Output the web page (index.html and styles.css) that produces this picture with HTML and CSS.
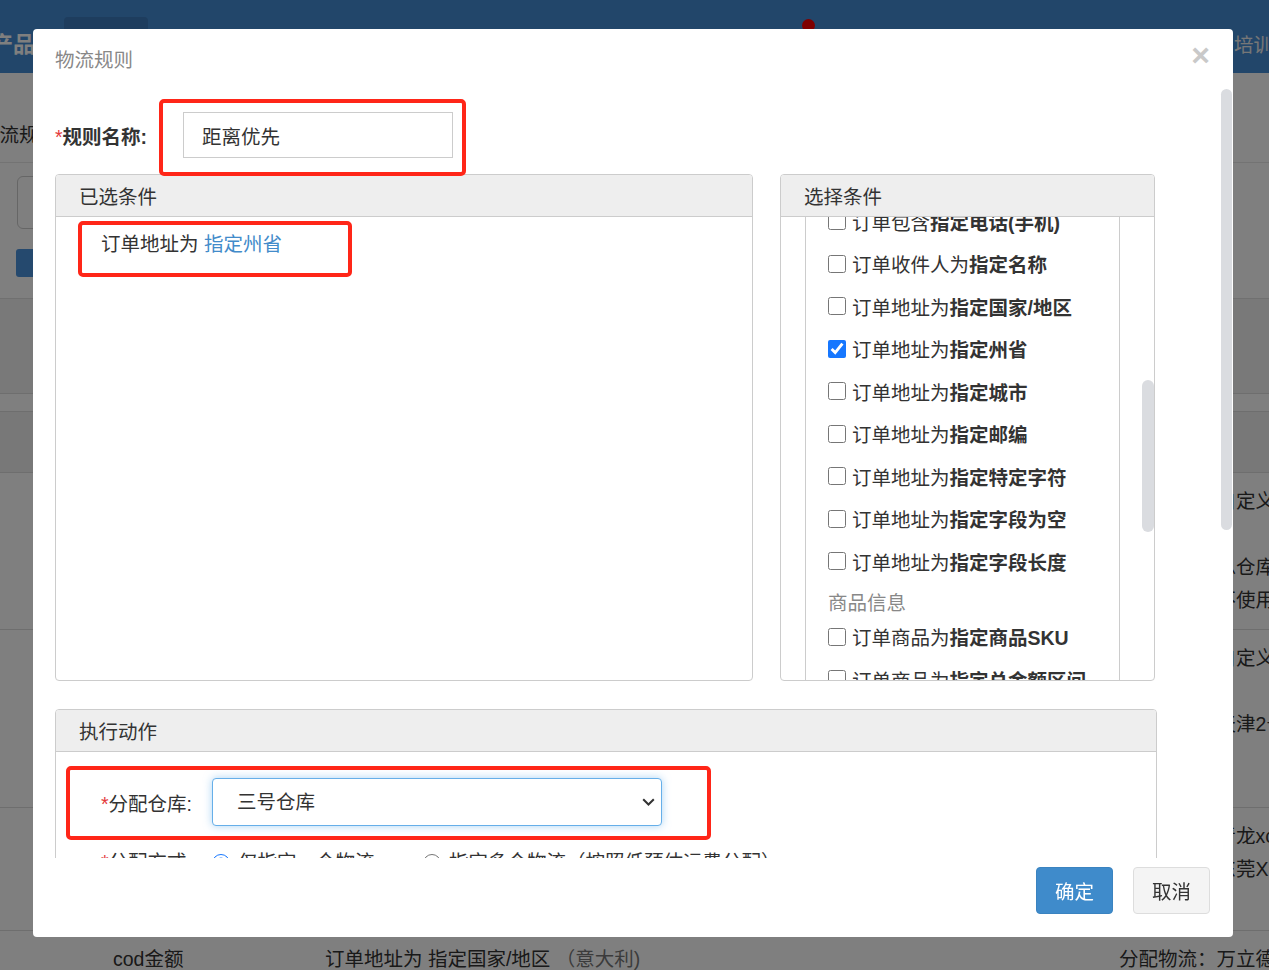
FILE: index.html
```html
<!DOCTYPE html>
<html lang="zh-CN">
<head>
  <meta charset="UTF-8" />
  <meta name="viewport" content="width=device-width, initial-scale=1.0" />
  <title>物流规则</title>
  <link rel="stylesheet" href="styles.css">
</head>
<body>
  <div class="page">
    <div class="topnav">
      <span class="brand">产品</span>
      <span class="nav-tab"></span>
      <span class="nav-dot"></span>
      <span class="nav-link">培训</span>
    </div>

    <div class="page-title">物流规则</div>

    <div class="search-box">
      <div class="search-input"></div>
      <button class="search-btn">全部</button>
    </div>

    <div class="toolbar"></div>
    <div class="table-gap"></div>

    <div class="rule-table">
      <div class="tr th">
        <div class="td">规则名称</div>
        <div class="td">条件</div>
        <div class="td">动作</div>
      </div>
      <div class="tr tr-1">
        <div class="td"><p>默认规则</p></div>
        <div class="td"><p>订单来源为 指定平台</p></div>
        <div class="td">
          <p>分配物流：自定义</p>
          <p class="gap">分配仓库：总仓库</p>
          <p>运费计算：不使用</p>
        </div>
      </div>
      <div class="tr tr-2">
        <div class="td"><p>天津仓规则</p></div>
        <div class="td"><p>订单地址为 指定州省</p></div>
        <div class="td">
          <p>分配物流：自定义</p>
          <p class="gap">分配仓库：天津2号仓</p>
        </div>
      </div>
      <div class="tr tr-3">
        <div class="td"><p>东莞仓规则</p></div>
        <div class="td"><p>订单地址为 指定城市</p></div>
        <div class="td">
          <p>分配物流：青龙xc物流</p>
          <p>分配仓库：东莞X仓</p>
        </div>
      </div>
      <div class="tr tr-4">
        <div class="td"><p>cod金额</p></div>
        <div class="td"><p>订单地址为 指定国家/地区 <span class="muted">（意大利)</span></p></div>
        <div class="td"><p>分配物流：万立德</p></div>
      </div>
    </div>
  </div>

  <div class="mask"></div>

  <div class="modal">
    <div class="modal-header">
      <h4 class="modal-title">物流规则</h4>
      <button class="modal-close">×</button>
    </div>

    <div class="modal-body">
      <div class="rule-form">
        <div class="rule-name">
          <label class="name-label"><span class="req">*</span>规则名称:</label>
          <input class="name-input" type="text" value="距离优先">
          <span class="mark mark-name"></span>
        </div>

        <div class="cond-grid">
          <div class="panel">
            <div class="panel-heading">已选条件</div>
            <div class="panel-body selected-body">
              <div class="selected-item">订单地址为 <a href="#" class="cond-value">指定州省</a></div>
              <span class="mark mark-selected"></span>
            </div>
          </div>

          <div class="panel">
            <div class="panel-heading">选择条件</div>
            <div class="panel-body cond-wrap">
              <div class="cond-body" id="cond-body">
                <ul class="cond-list">
                  <li class="cond-group">订单信息</li>
                  <li><label><input type="checkbox"><span>订单来源为<b>指定平台</b></span></label></li>
                  <li><label><input type="checkbox"><span>订单来源为<b>指定店铺</b></span></label></li>
                  <li><label><input type="checkbox"><span>订单金额为<b>指定区间</b></span></label></li>
                  <li><label><input type="checkbox"><span>订单重量为<b>指定区间</b></span></label></li>
                  <li><label><input type="checkbox"><span>订单币种为<b>指定币种</b></span></label></li>
                  <li><label><input type="checkbox"><span>订单包含<b>指定买家ID</b></span></label></li>
                  <li><label><input type="checkbox"><span>订单为<b>指定付款方式</b></span></label></li>
                  <li><label><input type="checkbox"><span>订单物流为<b>指定物流方式</b></span></label></li>
                  <li><label><input type="checkbox"><span>订单包含<b>指定备注</b></span></label></li>
                  <li><label><input type="checkbox"><span>订单包含<b>指定邮箱</b></span></label></li>
                  <li class="cond-group">收件人信息</li>
                  <li class="cond-phone"><label><input type="checkbox"><span>订单包含<b>指定电话(手机)</b></span></label></li>
                  <li><label><input type="checkbox"><span>订单收件人为<b>指定名称</b></span></label></li>
                  <li><label><input type="checkbox"><span>订单地址为<b>指定国家/地区</b></span></label></li>
                  <li><label><input type="checkbox" checked><span>订单地址为<b>指定州省</b></span></label></li>
                  <li><label><input type="checkbox"><span>订单地址为<b>指定城市</b></span></label></li>
                  <li><label><input type="checkbox"><span>订单地址为<b>指定邮编</b></span></label></li>
                  <li><label><input type="checkbox"><span>订单地址为<b>指定特定字符</b></span></label></li>
                  <li><label><input type="checkbox"><span>订单地址为<b>指定字段为空</b></span></label></li>
                  <li><label><input type="checkbox"><span>订单地址为<b>指定字段长度</b></span></label></li>
                  <li class="cond-group">商品信息</li>
                  <li><label><input type="checkbox"><span>订单商品为<b>指定商品SKU</b></span></label></li>
                  <li><label><input type="checkbox"><span>订单商品为<b>指定总金额区间</b></span></label></li>
                  <li><label><input type="checkbox"><span>订单商品为<b>指定总数量区间</b></span></label></li>
                  <li><label><input type="checkbox"><span>订单商品为<b>指定总重量区间</b></span></label></li>
                  <li><label><input type="checkbox"><span>订单商品为<b>指定商品类别</b></span></label></li>
                  <li><label><input type="checkbox"><span>订单商品为<b>指定商品标签</b></span></label></li>
                  <li class="cond-group">其他</li>
                  <li><label><input type="checkbox"><span>订单为<b>指定平台物流</b></span></label></li>
                  <li><label><input type="checkbox"><span>订单为<b>买家指定物流</b></span></label></li>
                  <li><label><input type="checkbox"><span>订单备注包含<b>指定字符</b></span></label></li>
                  <li><label><input type="checkbox"><span>订单为<b>指定时间段</b></span></label></li>
                  <li><label><input type="checkbox"><span>订单为<b>指定付款方式</b></span></label></li>
                </ul>
              </div>
              <span class="scroll-thumb cond-thumb"></span>
            </div>
          </div>
        </div>

        <div class="panel action-panel">
          <div class="panel-heading">执行动作</div>
          <div class="panel-body action-body">
            <div class="action-row">
              <label class="action-label"><span class="req">*</span>分配仓库:</label>
              <div class="select-wrap">
                <select class="action-select">
                  <option>三号仓库</option>
                  <option>一号仓库</option>
                  <option>二号仓库</option>
                </select>
                <svg class="select-arrow" width="13" height="8" viewBox="0 0 13 8"><path d="M1.2 1.2 6.5 6.5 11.8 1.2" fill="none" stroke="#333" stroke-width="2"/></svg>
              </div>
            </div>
            <div class="action-row radio-row">
              <label class="action-label"><span class="req">*</span>分配方式:</label>
              <label class="radio radio-first"><input type="radio" name="mode" checked>仅指定一个物流</label>
              <label class="radio"><input type="radio" name="mode">指定多个物流（按照低预估运费分配）</label>
            </div>
            <div class="action-row">
              <label class="action-label"><span class="req">*</span>指定物流:</label>
              <div class="select-wrap">
                <select class="action-select plain">
                  <option>请选择物流</option>
                </select>
              </div>
            </div>
            <div class="action-row">
              <label class="action-label">备注:</label>
              <textarea class="action-note"></textarea>
            </div>
            <span class="mark mark-action"></span>
          </div>
        </div>
      </div>
    </div>
    <span class="scroll-thumb modal-thumb"></span>

    <div class="modal-footer">
      <button class="btn btn-primary">确定</button>
      <button class="btn btn-default">取消</button>
    </div>
  </div>

  <script>
    const condBody = document.getElementById("cond-body");
    const phoneRow = document.querySelector(".cond-phone");
    condBody.scrollTop = phoneRow.offsetTop + 17;
  </script>
</body>
</html>
```

FILE: styles.css
```css
* {
  margin: 0;
  padding: 0;
  box-sizing: border-box;
}

html, body {
  height: 100%;
  overflow: hidden;
}

body {
  font-family: "Liberation Sans", "Noto Sans CJK SC", sans-serif;
  font-size: 19.5px;
  color: #333;
  background: #fff;
}

button, input, select, textarea {
  font-family: inherit;
  font-size: inherit;
  color: inherit;
}

/* ---------- page behind the dialog ---------- */

.page {
  width: 100%;
  white-space: nowrap;
}

.topnav {
  height: 73px;
  background: #448cd4;
  display: flex;
  position: relative;
}

.brand {
  margin-left: -9px;
  padding-top: 17px;
  line-height: 56px;
  font-size: 22px;
  font-weight: bold;
  color: #fff;
}

.nav-tab {
  margin: 17px 0 0 29px;
  width: 84px;
  height: 56px;
  background: #3c7abc;
  border-radius: 4px 4px 0 0;
}

.nav-dot {
  position: absolute;
  left: 802px;
  top: 19px;
  width: 13px;
  height: 13px;
  border-radius: 50%;
  background: #f00;
}

.nav-link {
  margin-left: auto;
  margin-right: -4px;
  padding-top: 17px;
  line-height: 56px;
  color: #eee;
}

.page-title {
  height: 90px;
  line-height: 124px;
  margin-left: -20px;
  border-bottom: 1px solid #e6e6e6;
}

.search-box {
  height: 135px;
  padding: 13px 0 0 17px;
}

.search-input {
  width: 320px;
  height: 53px;
  border: 1px solid #ccc;
  border-radius: 6px;
}

.search-btn {
  display: block;
  margin: 20px 0 0 -1px;
  width: 80px;
  height: 28px;
  border: none;
  border-radius: 3px;
  background: #4a92dc;
  color: #fff;
  font-size: 17px;
}

.toolbar {
  height: 95px;
  background: #f2f2f2;
  border-top: 1px solid #e0e0e0;
}

.table-gap {
  height: 18px;
  border-top: 1px solid #ddd;
}

.tr {
  display: grid;
  grid-template-columns: 212px 794px 1fr;
  padding-left: 113px;
  border-top: 1px solid #ddd;
  padding-top: 12px;
}

.tr p {
  line-height: 33px;
}

.tr p.gap {
  margin-top: 33px;
}

.th {
  height: 61px;
  background: #f0f0f0;
  line-height: 36px;
}

.tr-1 { height: 157px; }
.tr-2 { height: 178px; }
.tr-3 { height: 123px; }
.tr-4 { height: 80px; }

.muted {
  color: #777;
}

.mask {
  position: fixed;
  inset: 0;
  background: rgba(0, 0, 0, 0.5);
}

/* ---------- dialog ---------- */

.modal {
  position: fixed;
  left: 33px;
  top: 29px;
  width: 1200px;
  height: 908px;
  background: #fff;
  border-radius: 4px;
  display: flex;
  flex-direction: column;
}

.modal-header {
  height: 59px;
  flex-shrink: 0;
  display: flex;
  justify-content: space-between;
  align-items: flex-start;
  padding: 0 23px 0 22px;
}

.modal-title {
  padding-top: 3px;
  line-height: 56px;
  font-size: 19.5px;
  font-weight: normal;
  color: #888;
}

.modal-close {
  margin-top: 11px;
  line-height: 30px;
  font-size: 32px;
  font-weight: bold;
  color: #c9c9c9;
  background: none;
  border: none;
}

.modal-body {
  flex: 1;
  overflow-y: auto;
  padding: 24px 0 20px 22px;
}

/* scrollbars are hidden in the capture, so the thumbs are drawn */
.scroll-thumb {
  position: absolute;
  background: #dadce0;
  border-radius: 6px;
}

.modal-thumb {
  right: 1px;
  top: 60px;
  width: 11px;
  height: 441px;
}

.cond-thumb {
  right: 0;
  top: 163px;
  width: 12px;
  height: 152px;
}

.rule-form {
  width: 1102px;
}

.rule-name {
  position: relative;
  display: flex;
  align-items: center;
  height: 46px;
  margin-bottom: 16px;
}

.name-label {
  width: 128px;
  font-weight: bold;
}

.req {
  color: #e4393c;
  font-weight: normal;
}

.name-input {
  width: 270px;
  height: 46px;
  border: 1px solid #ccc;
  padding-left: 18px;
  outline: none;
}

/* red call-out frames */
.mark {
  position: absolute;
  border: 4px solid #ff2618;
  border-radius: 5px;
  pointer-events: none;
}

.mark-name {
  left: 104px;
  top: -13px;
  width: 307px;
  height: 77px;
}

.mark-selected {
  left: 22px;
  top: 4px;
  width: 274px;
  height: 56px;
}

.mark-action {
  left: 10px;
  top: 14px;
  width: 645px;
  height: 74px;
}

.cond-grid {
  display: grid;
  grid-template-columns: 698px 375px;
  gap: 27px;
  height: 507px;
  margin-bottom: 28px;
}

.panel {
  border: 1px solid #ccc;
  border-radius: 4px;
  display: flex;
  flex-direction: column;
  overflow: hidden;
}

.panel-heading {
  height: 42px;
  flex-shrink: 0;
  padding: 2px 0 0 23px;
  line-height: 41px;
  background: #eee;
  border-bottom: 1px solid #ccc;
}

.panel-body {
  flex: 1;
  position: relative;
  min-height: 0;
}

.selected-body {
  padding: 11px 0 0 45px;
}

.selected-item {
  line-height: 33px;
}

.cond-value {
  color: #428bca;
  text-decoration: none;
}

.cond-body {
  position: relative;
  height: 100%;
  overflow-y: auto;
  padding: 0 34px 0 24px;
}

.cond-list {
  list-style: none;
  border-left: 1px solid #ccc;
  border-right: 1px solid #ccc;
  padding: 0 0 9px 22px;
  white-space: nowrap;
}

.cond-list li {
  height: 42.5px;
  display: flex;
  align-items: center;
}

.cond-list li.cond-group {
  height: 33px;
  padding-top: 7px;
  line-height: 26px;
  color: #888;
}

.cond-list label {
  display: flex;
  align-items: center;
  gap: 6px;
}

.cond-list b {
  font-weight: bold;
}

.cond-list input[type="checkbox"] {
  width: 18px;
  height: 18px;
  margin: 0;
  accent-color: #1677ff;
}

.action-panel {
  min-height: 703px;
}

.action-body {
  padding: 26px 0 0 45px;
}

.action-row {
  display: flex;
  align-items: center;
  margin-bottom: 20px;
}

.action-label {
  width: 111px;
  flex-shrink: 0;
}

.select-wrap {
  position: relative;
  width: 450px;
  height: 48px;
}

.action-select {
  width: 100%;
  height: 100%;
  appearance: none;
  border: 1px solid #66afe9;
  border-radius: 4px;
  padding-left: 24px;
  background: #fff;
  box-shadow: 0 0 8px rgba(102, 175, 233, 0.55);
  outline: none;
}

.action-select.plain {
  border-color: #ccc;
  box-shadow: none;
}

.select-arrow {
  position: absolute;
  right: 7px;
  top: 20px;
}

.radio-row {
  height: 33px;
  line-height: 33px;
}

.radio {
  display: flex;
  align-items: center;
  gap: 8px;
}

.radio-first {
  width: 211px;
}

.radio input {
  width: 18px;
  height: 18px;
  margin: 0;
  accent-color: #1677ff;
}

.action-note {
  width: 700px;
  height: 150px;
  border: 1px solid #ccc;
  border-radius: 4px;
  resize: none;
}

.modal-footer {
  height: 79px;
  flex-shrink: 0;
  display: flex;
  justify-content: flex-end;
  gap: 20px;
  padding: 9px 23px 0 0;
}

.btn {
  width: 77px;
  height: 47px;
  border-radius: 4px;
  cursor: pointer;
}

.btn-primary {
  background: #3f8bcb;
  border: 1px solid #3a83c0;
  color: #fff;
}

.btn-default {
  background: #f4f4f4;
  border: 1px solid #ddd;
  color: #333;
}
```
